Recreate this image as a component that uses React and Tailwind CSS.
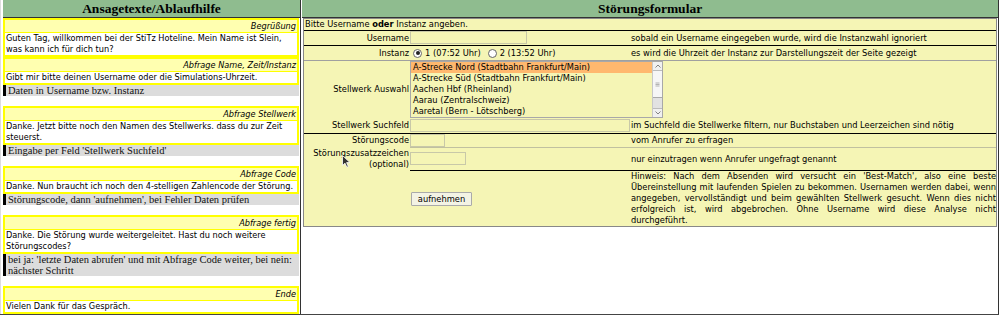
import React from 'react';

const sections = [
    { title: 'Begrüßung', text: 'Guten Tag, willkommen bei der StiTz Hoteline. Mein Name ist Slein, was kann ich für dich tun?' },
    { title: 'Abfrage Name, Zeit/Instanz', text: 'Gibt mir bitte deinen Username oder die Simulations-Uhrzeit.', note: 'Daten in Username bzw. Instanz' },
    { title: 'Abfrage Stellwerk', text: 'Danke. Jetzt bitte noch den Namen des Stellwerks. dass du zur Zeit steuerst.', note: "Eingabe per Feld 'Stellwerk Suchfeld'" },
    { title: 'Abfrage Code', text: 'Danke. Nun braucht ich noch den 4-stelligen Zahlencode der Störung.', note: "Störungscode, dann 'aufnehmen', bei Fehler Daten prüfen" },
    { title: 'Abfrage fertig', text: 'Danke. Die Störung wurde weitergeleitet. Hast du noch weitere Störungscodes?', note: "bei ja: 'letzte Daten abrufen' und mit Abfrage Code weiter, bei nein: nächster Schritt" },
    { title: 'Ende', text: 'Vielen Dank für das Gespräch.' },
];

const stellwerke = [
    'A-Strecke Nord (Stadtbahn Frankfurt/Main)',
    'A-Strecke Süd (Stadtbahn Frankfurt/Main)',
    'Aachen Hbf (Rheinland)',
    'Aarau (Zentralschweiz)',
    'Aaretal (Bern - Lötschberg)',
];

const Radio = ({ checked }) => (
    <span className="w-[9px] h-[9px] rounded-full border border-[#666] bg-white flex items-center justify-center">
        {checked && <span className="w-[4px] h-[4px] rounded-full bg-[#222]" />}
    </span>
);

const Section = ({ s }) => (
    <div className={s.note ? 'mb-[10px]' : ''}>
        <div className="w-[296px] border-2 border-[#ffff00]">
            <div className="h-[13px] leading-[12px] bg-[#ffffb0] border-b border-[#ffff00] text-right italic pr-[1px]">
                {s.title}
            </div>
            <div className="bg-white leading-[11px] pl-[1px]">{s.text}</div>
        </div>
        {s.note && (
            <div className="w-[296px] bg-[#dcdcdc] border-l-[3px] border-black pl-[2px] leading-[11px] text-[10.5px] font-['Liberation_Serif',serif] text-[#111]">
                {s.note}
            </div>
        )}
    </div>
);

const App = () => {
    return (
        <div className="w-[1000px] h-[319px] bg-white relative text-black font-['DejaVu_Sans',sans-serif] text-[8.2px]">
            <div className="flex w-[999px] border-b border-[#444]">
                {/* left column */}
                <div className="w-[301px] pl-[2px] border-r border-[#333] border-l border-l-[#ddd]">
                    <div className="h-[18px] bg-[#8fbc8f] border-b border-[#333] text-center leading-[17px] font-bold text-[13.5px] font-['Liberation_Serif',serif]">
                        Ansagetexte/Ablaufhilfe
                    </div>
                    {sections.map((s, i) => (
                        <Section key={i} s={s} />
                    ))}
                </div>

                {/* right column */}
                <div className="flex-1 pl-[1px] border-r border-[#333] text-[8.3px]">
                    <div className="h-[18px] bg-[#8fbc8f] border-b border-[#333] text-center leading-[17px] font-bold text-[13.5px] font-['Liberation_Serif',serif]">
                        Störungsformular
                    </div>
                    <div className="ml-[1px] mr-[1px] border border-[#888] bg-[#f5f5b5] leading-[11px]">
                        <div className="h-[12px] leading-[11px] pl-[1px] border-b border-black">
                            Bitte Username <b>oder</b> Instanz angeben.
                        </div>

                        <div className="grid grid-cols-[106px_220px_1fr] h-[15px] border-b border-black">
                            <div className="text-right pr-[1px] leading-[14px]">Username</div>
                            <div><div className="w-[117px] h-[13px] border border-[#c8c8a8]" /></div>
                            <div className="pl-[1px] leading-[14px]">sobald ein Username eingegeben wurde, wird die Instanzwahl ignoriert</div>
                        </div>

                        <div className="grid grid-cols-[106px_220px_1fr] h-[15px] border-b border-[#a0a0a0]">
                            <div className="text-right pr-[1px] leading-[14px]">Instanz</div>
                            <div className="flex items-center pl-[3px] gap-[3px] leading-[14px]">
                                <Radio checked />
                                <span className="mr-[4px]">1 (07:52 Uhr)</span>
                                <Radio />
                                <span>2 (13:52 Uhr)</span>
                            </div>
                            <div className="pl-[1px] leading-[14px]">es wird die Uhrzeit der Instanz zur Darstellungszeit der Seite gezeigt</div>
                        </div>

                        <div className="grid grid-cols-[106px_220px_1fr] h-[57px]">
                            <div className="text-right pr-[1px] flex items-center justify-end">Stellwerk Auswahl</div>
                            <div className="relative">
                                <div className="absolute left-0 top-0 w-[253px] h-[57px] border border-[#a8a8a8] flex">
                                    <div className="flex-1">
                                        {stellwerke.map((n, i) => (
                                            <div key={i} className={'h-[11px] leading-[11px] pl-[2px] whitespace-nowrap ' + (i === 0 ? 'bg-[#ffb86e]' : '')}>
                                                {n}
                                            </div>
                                        ))}
                                    </div>
                                    <div className="w-[10px] bg-[#e2e2e2] flex flex-col border-l border-[#c8c8c8]">
                                        <div className="h-[9px] bg-[#f0f0f0] border-b border-[#bbb] flex items-center justify-center">
                                            <svg width="6" height="4" viewBox="0 0 6 4"><path d="M0.5 3.5 L3 1 L5.5 3.5" fill="none" stroke="#666" strokeWidth="0.8" /></svg>
                                        </div>
                                        <div className="h-[27px] bg-[#f6f6f6] border-b border-[#aaa] flex items-center justify-center">
                                            <svg width="5" height="5" viewBox="0 0 5 5"><path d="M0.5 1h4M0.5 2.5h4M0.5 4h4" stroke="#888" strokeWidth="0.6" /></svg>
                                        </div>
                                        <div className="flex-1" />
                                        <div className="h-[9px] bg-[#f0f0f0] border-t border-[#bbb] flex items-center justify-center">
                                            <svg width="6" height="4" viewBox="0 0 6 4"><path d="M0.5 0.5 L3 3 L5.5 0.5" fill="none" stroke="#666" strokeWidth="0.8" /></svg>
                                        </div>
                                    </div>
                                </div>
                            </div>
                            <div />
                        </div>

                        <div className="grid grid-cols-[106px_220px_1fr] h-[16px] border-b border-black">
                            <div className="text-right pr-[1px] leading-[15px]">Stellwerk Suchfeld</div>
                            <div className="pt-[1px]"><div className="w-[220px] h-[13px] border border-[#c8c8a8]" /></div>
                            <div className="pl-[1px] leading-[15px]">im Suchfeld die Stellwerke filtern, nur Buchstaben und Leerzeichen sind nötig</div>
                        </div>

                        <div className="grid grid-cols-[106px_220px_1fr] h-[14px]">
                            <div className="text-right pr-[1px] leading-[13px]">Störungscode</div>
                            <div className="border-b border-[#c0c0a0]"><div className="w-[35px] h-[13px] border border-[#c8c8a8]" /></div>
                            <div className="pl-[1px] leading-[13px] border-b border-[#c0c0a0]">vom Anrufer zu erfragen</div>
                        </div>

                        <div className="grid grid-cols-[106px_220px_1fr] h-[23px]">
                            <div className="text-right pr-[1px] leading-[11px]">Störungszusatzzeichen (optional)</div>
                            <div className="border-b border-black pt-[4px]"><div className="w-[56px] h-[13px] border border-[#c8c8a8]" /></div>
                            <div className="pl-[1px] border-b border-black leading-[22px]">nur einzutragen wenn Anrufer ungefragt genannt</div>
                        </div>

                        <div className="grid grid-cols-[106px_220px_1fr] h-[55px]">
                            <div />
                            <div className="flex items-center">
                                <button className="ml-[1px] w-[61px] h-[14px] border border-[#aaa] bg-[#f3f3e4] leading-[12px] rounded-[1px]">
                                    aufnehmen
                                </button>
                            </div>
                            <div className="pl-[1px] text-justify leading-[11px]">
                                Hinweis: Nach dem Absenden wird versucht ein 'Best-Match', also eine beste Übereinstellung mit laufenden Spielen zu bekommen. Usernamen werden dabei, wenn angegeben, vervollständigt und beim gewählten Stellwerk gesucht. Wenn dies nicht erfolgreich ist, wird abgebrochen. Ohne Username wird diese Analyse nicht durchgeführt.
                            </div>
                        </div>
                    </div>
                </div>
            </div>

            {/* mouse pointer */}
            <svg className="absolute left-[342px] top-[155px]" width="9" height="13" viewBox="0 0 9 13">
                <path d="M0.5 0.5 L0.5 10.5 L3 8.2 L4.8 12.2 L6.3 11.5 L4.6 7.6 L8 7.6 Z" fill="#333" stroke="#fff" strokeWidth="0.8" />
            </svg>
        </div>
    );
};

export default App;
